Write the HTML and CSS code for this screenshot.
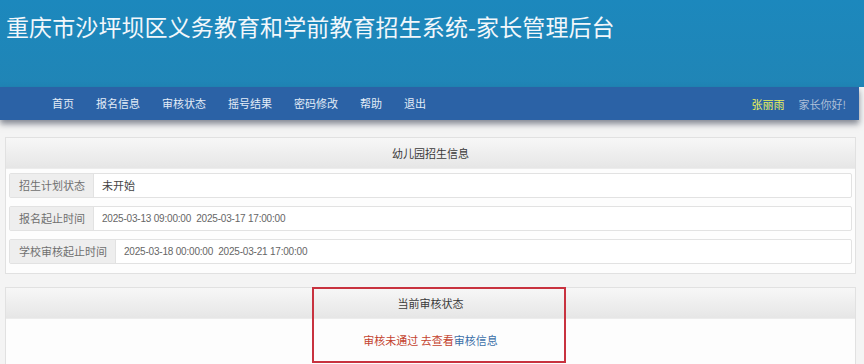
FILE: index.html
```html
<!DOCTYPE html>
<html lang="zh-CN">
<head>
<meta charset="utf-8">
<title>家长管理后台</title>
<link rel="stylesheet" href="styles.css">
</head>
<body>
<div class="top">
  <h1 class="title">重庆市沙坪坝区义务教育和学前教育招生系统-家长管理后台</h1>
</div>
<div class="nav">
  <ul class="menu">
    <li>首页</li>
    <li>报名信息</li>
    <li>审核状态</li>
    <li>摇号结果</li>
    <li>密码修改</li>
    <li>帮助</li>
    <li>退出</li>
  </ul>
  <div class="user">
    <span class="uname">张丽雨</span>
    <span class="hello">家长你好!</span>
  </div>
</div>
<div class="main">
  <div class="panel">
    <div class="phead">幼儿园招生信息</div>
    <div class="rows">
      <div class="row"><span class="lbl">招生计划状态</span><span class="val">未开始</span></div>
      <div class="row"><span class="lbl">报名起止时间</span><span class="val date">2025-03-13 09:00:00&nbsp; 2025-03-17 17:00:00</span></div>
      <div class="row"><span class="lbl">学校审核起止时间</span><span class="val date">2025-03-18 00:00:00&nbsp; 2025-03-21 17:00:00</span></div>
    </div>
  </div>
  <div class="panel panel2">
    <div class="phead">当前审核状态</div>
    <div class="pbody"><span class="red">审核未通过 去查看</span><span class="blue">审核信息</span></div>
    <div class="mark"></div>
  </div>
</div>
</body>
</html>
```
FILE: styles.css
```css
* { box-sizing: border-box; }
html, body { margin: 0; padding: 0; }
body {
  width: 864px;
  height: 364px;
  overflow: hidden;
  background: #f4f4f4;
  font-family: "Liberation Sans", "Noto Sans CJK SC", sans-serif;
  font-size: 11px;
  color: #555;
}
.top {
  height: 87px;
  background: linear-gradient(180deg, #1c88bd 0%, #2085b6 100%);
  padding: 10px 0 0 6px;
}
.title {
  margin: 0;
  font-family: "Noto Sans CJK SC", sans-serif;
  font-weight: normal;
  font-size: 23px;
  line-height: 32px;
  color: #f2f7fb;
  letter-spacing: 0.1px;
}
.nav {
  width: 859px;
  height: 33px;
  background: #2b62a6;
  display: flex;
  align-items: center;
  justify-content: space-between;
  padding: 0 13px 0 41px;
  box-shadow: 0 4px 6px rgba(40, 50, 70, 0.55);
  position: relative;
  z-index: 2;
}
.menu {
  list-style: none;
  margin: 0;
  padding: 0;
  display: flex;
}
.menu li {
  padding: 0 11px;
  color: #e3ecf7;
  font-family: "Noto Sans CJK SC", sans-serif;
  font-size: 11px;
  line-height: 33px;
}
.user {
  display: flex;
  gap: 14px;
  font-family: "Noto Sans CJK SC", sans-serif;
  font-size: 11px;
}
.uname { color: #eaf25a; }
.hello { color: #aebfd8; }
.main {
  padding: 17px 8px 0 5px;
  display: flex;
  flex-direction: column;
  gap: 13px;
}
.panel {
  border: 1px solid #e1e1e1;
  background: #fdfdfd;
  position: relative;
}
.phead {
  height: 31px;
  line-height: 31px;
  text-align: center;
  color: #3a3a3a;
  font-family: "Noto Sans CJK SC", sans-serif;
  font-size: 11px;
  background: linear-gradient(180deg, #f7f7f7 0%, #e6e6e6 100%);
  border-bottom: 1px solid #ececec;
}
.rows {
  padding: 4px 3px 9px 3px;
  display: flex;
  flex-direction: column;
  gap: 8px;
}
.row {
  height: 25px;
  border: 1px solid #e2e2e2;
  border-radius: 2px;
  background: #fff;
  display: flex;
  align-items: stretch;
}
.lbl {
  background: #eeeeee;
  border-right: 1px solid #e2e2e2;
  padding: 0 8px 0 9px;
  line-height: 23px;
  color: #707070;
  font-family: "Noto Sans CJK SC", sans-serif;
}
.val {
  padding-left: 8px;
  line-height: 23px;
  color: #444;
  font-family: "Noto Sans CJK SC", sans-serif;
}
.val.date {
  font-family: "Liberation Sans", sans-serif;
  font-size: 10px;
  letter-spacing: -0.2px;
  color: #666;
}
.panel2 { height: 90px; }
.pbody {
  text-align: center;
  padding-top: 11px;
  line-height: 20px;
  font-family: "Noto Sans CJK SC", sans-serif;
  font-size: 11px;
}
.red { color: #c4432f; }
.blue { color: #3b6fa8; }
.mark {
  position: absolute;
  left: 306px;
  top: -1px;
  width: 254px;
  height: 76px;
  border: 2px solid #c8323f;
}
```
